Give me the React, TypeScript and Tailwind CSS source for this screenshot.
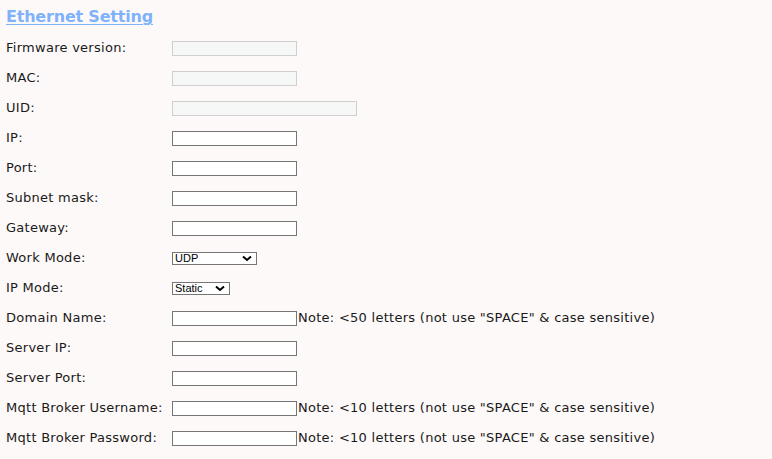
import React from "react";

const font = { fontFamily: '"DejaVu Sans", Verdana, sans-serif' };

function Row({ label, children }: { label: string; children: React.ReactNode }) {
  return (
    <div className="flex h-[30px] items-center">
      <div className="w-[166px] shrink-0 text-[13px] tracking-[0.27px] text-[#1a1a1a]">{label}</div>
      <div className="flex items-center">{children}</div>
    </div>
  );
}

function DisInput({ w = 125 }: { w?: number }) {
  return <div className={`h-[15px] border border-[#cfcfcf] bg-[#f6f7f7] ${w === 185 ? "w-[185px]" : "w-[125px]"}`} />;
}

function Input() {
  return <input className="h-[15px] w-[125px] border border-[#767676] bg-white outline-none" />;
}

function Note({ n }: { n: number }) {
  return (
    <span className="ml-[1px] text-[13px] tracking-[0.27px] text-[#1a1a1a]">
      Note: &lt;{n} letters (not use "SPACE" &amp; case sensitive)
    </span>
  );
}

function Select({ label, w }: { label: string; w: string }) {
  return (
    <div
      className={`flex h-[13px] ${w} items-center justify-between border border-[#767676] bg-white pl-[2px] pr-[4px] text-[11px] leading-none text-black`}
      style={{ fontFamily: '"Liberation Sans", Arial, sans-serif' }}
    >
      <span>{label}</span>
      <svg width="10" height="7" viewBox="0 0 10 7">
        <path d="M1 1.5 L5 5 L9 1.5" stroke="#000" strokeWidth="2" fill="none" />
      </svg>
    </div>
  );
}

export default function App() {
  return (
    <div className="min-h-[459px] w-[772px] bg-[#fdf9f8] pl-[6px]" style={font}>
      <div className="h-[33px] pt-[5px]">
        <span className="text-[16px] font-bold tracking-[-0.2px] text-[#7fb2fb] underline decoration-1 underline-offset-2">
          Ethernet Setting
        </span>
      </div>
      <Row label="Firmware version:"><DisInput /></Row>
      <Row label="MAC:"><DisInput /></Row>
      <Row label="UID:"><DisInput w={185} /></Row>
      <Row label="IP:"><Input /></Row>
      <Row label="Port:"><Input /></Row>
      <Row label="Subnet mask:"><Input /></Row>
      <Row label="Gateway:"><Input /></Row>
      <Row label="Work Mode:"><Select label="UDP" w="w-[85px]" /></Row>
      <Row label="IP Mode:"><Select label="Static" w="w-[58px]" /></Row>
      <Row label="Domain Name:"><Input /><Note n={50} /></Row>
      <Row label="Server IP:"><Input /></Row>
      <Row label="Server Port:"><Input /></Row>
      <Row label="Mqtt Broker Username:"><Input /><Note n={10} /></Row>
      <Row label="Mqtt Broker Password:"><Input /><Note n={10} /></Row>
    </div>
  );
}
